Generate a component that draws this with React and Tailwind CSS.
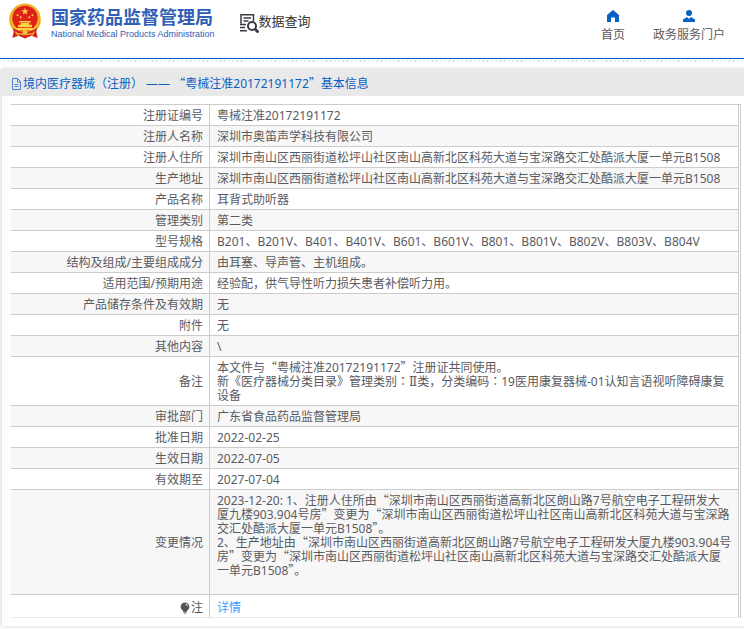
import React from "react";

const BASE = "font-['Noto_Sans','Noto_Sans_CJK_SC',sans-serif]";

const NOTE = [
  "本文件与“粤械注准20172191172”注册证共同使用。",
  "新《医疗器械分类目录》管理类别：Ⅱ类，分类编码：19医用康复器械-01认知言语视听障碍康复",
  "设备",
];

const CHANGES = [
  "2023-12-20: 1、注册人住所由“深圳市南山区西丽街道高新北区朗山路7号航空电子工程研发大",
  "厦九楼903.904号房”变更为“深圳市南山区西丽街道松坪山社区南山高新北区科苑大道与宝深路",
  "交汇处酷派大厦一单元B1508”。",
  "2、生产地址由“深圳市南山区西丽街道高新北区朗山路7号航空电子工程研发大厦九楼903.904号",
  "房”变更为“深圳市南山区西丽街道松坪山社区南山高新北区科苑大道与宝深路交汇处酷派大厦",
  "一单元B1508”。",
  "",
];

const ADDRESS = "深圳市南山区西丽街道松坪山社区南山高新北区科苑大道与宝深路交汇处酷派大厦一单元B1508";

const ROWS = [
  ["注册证编号", ["粤械注准20172191172"]],
  ["注册人名称", ["深圳市奥笛声学科技有限公司"]],
  ["注册人住所", [ADDRESS]],
  ["生产地址", [ADDRESS]],
  ["产品名称", ["耳背式助听器"]],
  ["管理类别", ["第二类"]],
  ["型号规格", ["B201、B201V、B401、B401V、B601、B601V、B801、B801V、B802V、B803V、B804V"]],
  ["结构及组成/主要组成成分", ["由耳塞、导声管、主机组成。"]],
  ["适用范围/预期用途", ["经验配，供气导性听力损失患者补偿听力用。"]],
  ["产品储存条件及有效期", ["无"]],
  ["附件", ["无"]],
  ["其他内容", ["\\"]],
  ["备注", NOTE],
  ["审批部门", ["广东省食品药品监督管理局"]],
  ["批准日期", ["2022-02-25"]],
  ["生效日期", ["2022-07-05"]],
  ["有效期至", ["2027-07-04"]],
  ["变更情况", CHANGES],
];

// Full-width punctuation takes its glyphs from a CJK face.
function Mixed({ text }) {
  return text.split(/([“”：Ⅱ])/).map((part, i) => {
    if (part === "“" || part === "”")
      return <span key={i} className="leading-none font-['Noto_Sans_CJK_SC',sans-serif]">{part}</span>;
    if (part === "：")
      return <span key={i} lang="zh-TW" className="leading-none font-['Noto_Sans_CJK_TC',sans-serif]">{part}</span>;
    if (part === "Ⅱ")
      return <span key={i} className="leading-none font-['Liberation_Serif','DejaVu_Serif',serif]">{part}</span>;
    return <React.Fragment key={i}>{part}</React.Fragment>;
  });
}

function Emblem() {
  return (
    <svg viewBox="0 0 64 68" className="h-[36px] w-[34px]" aria-hidden="true">
      <path d="M12 48 L8 66 L20 62 L32 67 L44 62 L56 66 L52 48Z" fill="#d8231c" />
      <circle cx="32" cy="31" r="30" fill="#f2b92f" />
      <circle cx="32" cy="31" r="27.500" fill="none" stroke="#dd8a1c" strokeWidth="1.500" strokeDasharray="3 2" />
      <circle cx="32" cy="29" r="24" fill="#df2119" />
      <path d="M32 9l1.800 4.500 4.800.3-3.700 3 1.200 4.700-4.100-2.600-4.100 2.600 1.200-4.700-3.700-3 4.800-.3z" fill="#fbd443" />
      <g fill="#fbd443">
        <circle cx="18" cy="23" r="1.900" />
        <circle cx="24" cy="27" r="1.900" />
        <circle cx="40" cy="27" r="1.900" />
        <circle cx="46" cy="23" r="1.900" />
        <path d="M22 34h20l2 3H20zM24 38h16v3h5v5H19v-5h5zM14 47h36l-3 4H17z" />
      </g>
      <path d="M9 47q11 7 23 7t23-7l-3 11q-9-3-20 2-11-5-20-2z" fill="#d8231c" />
      <circle cx="32" cy="55" r="5" fill="#f5c438" />
      <path d="M14 54l6 8M50 54l-6 8" stroke="#f5c438" strokeWidth="2" />
    </svg>
  );
}

function SearchDoc() {
  return (
    <svg viewBox="0 0 20 20" className="size-5" fill="none" stroke="#3b3b46" strokeWidth="1.500" aria-hidden="true">
      <path d="M2 10.500V1.700h12.500V8M4.500 5h7.500M4.500 8h5M1 11.500h6M1 14.500h5M1 17.700h7" />
      <circle cx="13" cy="13" r="4" strokeWidth="2" />
      <path d="M16 16l3.500 3.500" strokeWidth="2.800" />
    </svg>
  );
}

function DocIcon() {
  return (
    <svg viewBox="0 0 12 12" className="size-3 shrink-0" fill="none" stroke="#4a7fcb" aria-hidden="true">
      <path d="M1.500.5h5l3 3v8h-8zM6.500.5v3.500h3M3.500 6.500h4M3.500 8.500h4" />
    </svg>
  );
}

function Bulb() {
  return (
    <svg viewBox="0 0 10 12" className="h-3 w-2.5" aria-hidden="true">
      <path d="M5 .5a4.300 4.300 0 0 0-2.500 7.800L3.500 10h3l1-1.700A4.300 4.300 0 0 0 5 .5zM3.500 10.500h3v1h-3z" fill="#555" />
      <path d="M5.500 2q1.800.3 2 2.200" fill="none" stroke="#fff" />
    </svg>
  );
}

export default function App() {
  return (
    <div className={`${BASE} text-xs text-[#5a5b5f] bg-[#fafafa]`} lang="zh-CN">
      <header className="bg-white">
        <div className="flex h-[58px] items-start justify-between pl-2 pr-[19px]">
          <div className="flex items-start">
            <div className="pt-[3px]">
              <Emblem />
            </div>
            <div className="ml-[9px] pt-1.5 text-[#2f60b5]">
              <h1 className="text-lg leading-5 font-bold font-['Noto_Sans_CJK_SC',sans-serif]">国家药品监督管理局</h1>
              <p className="pt-0.5 text-[9px] leading-3 font-['Liberation_Sans',sans-serif] whitespace-nowrap">
                National Medical Products Administration
              </p>
            </div>
            <div className="ml-6 flex pt-[13px]">
              <SearchDoc />
              <span className="text-[13px] leading-4 text-[#333]">数据查询</span>
            </div>
          </div>
          <nav className="flex gap-7 pt-[9px]">
            <a href="#home" className="flex flex-col items-center gap-[5px]">
              <svg viewBox="0 0 12 12" className="size-3 mt-px" fill="#0a5fc2" aria-hidden="true">
                <path d="M6 0L0 5v7h4V7.500h4V12h4V5z" />
              </svg>
              <span className="leading-4">首页</span>
            </a>
            <a href="#portal" className="flex flex-col items-center gap-[5px]">
              <svg viewBox="0 0 12 12" className="size-3 mt-px" fill="#0a5fc2" aria-hidden="true">
                <circle cx="6" cy="3" r="3" />
                <path d="M0 12V9.500L4 7l2 2 2-2 4 2.500V12z" />
              </svg>
              <span className="leading-4">政务服务门户</span>
            </a>
          </nav>
        </div>
        <div className="h-px bg-[#0a5fc2]" />
        <div className="mt-px h-0.5 bg-[repeating-linear-gradient(135deg,#ddd_0_1px,#fff_1px_3px)]" />
        <div className="h-[7px]" />
      </header>

      <main className="ml-0.5 mb-1 bg-white pb-2 shadow-[0_0_4px_rgba(0,0,0,0.2)]">
        <h2 className="flex h-[27px] items-center bg-[#e9e9e9] pl-[9px] pt-0.5 text-[#0a5fc2] whitespace-pre">
          <DocIcon />
          <span className="leading-4">
            境内医疗器械（注册） —— <Mixed text="“粤械注准20172191172”基本信息" />
          </span>
        </h2>
        <div className="mt-2 ml-[9px] mr-[3px] border-t border-r border-[#ccc] pr-px">
          <table className="w-full table-fixed border-separate border-spacing-0 leading-[14px]">
            <colgroup>
              <col className="w-[199px]" />
              <col />
            </colgroup>
            <tbody>
              {ROWS.map(([label, lines]) => (
                <tr key={label} className="even:bg-[#f7f7f7]">
                  <th scope="row" className="border-r border-b border-[#ccc] pt-1 pb-0.5 pr-1.5 text-right font-normal">
                    {label}
                  </th>
                  <td className="border-r border-b border-[#ccc] pt-1 pb-0.5 pl-[7px]">
                    {lines.map((line, i) => (
                      <div key={i} className="h-3.5 whitespace-nowrap">
                        <Mixed text={line} />
                      </div>
                    ))}
                  </td>
                </tr>
              ))}
              <tr>
                <th scope="row" className="border-r border-b border-r-[#ccc] border-b-[#e8ebf0] pt-1.5 pb-0.5 pr-1.5 font-normal">
                  <div className="flex items-center justify-end gap-px">
                    <Bulb />
                    <span>注</span>
                  </div>
                </th>
                <td className="border-r border-b border-r-[#ccc] border-b-[#e8ebf0] pt-1.5 pb-0.5 pl-[7px]">
                  <a href="#detail" className="text-[#409eff]">详情</a>
                </td>
              </tr>
            </tbody>
          </table>
        </div>
      </main>
    </div>
  );
}
